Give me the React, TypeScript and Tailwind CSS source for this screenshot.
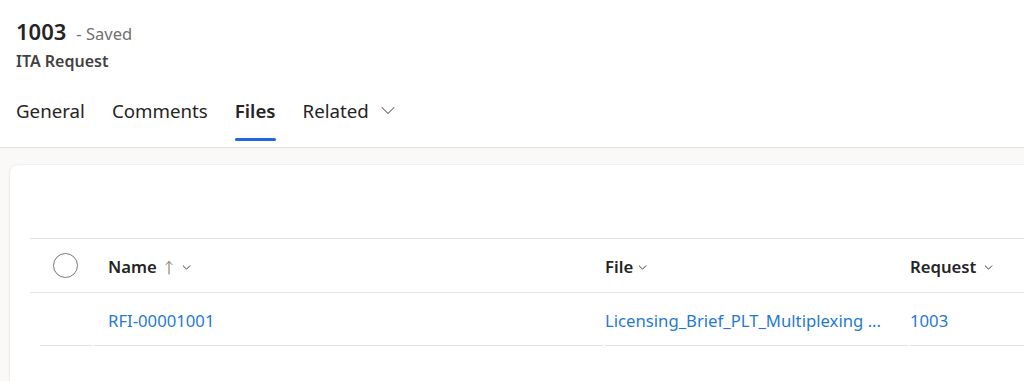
const Chevron = ({ className, w = 1.2 }: { className?: string; w?: number }) => (
  <svg className={className} viewBox="0 0 10 6" fill="none" stroke="currentColor" strokeWidth={w} strokeLinecap="round" strokeLinejoin="round">
    <path d="M1 1l4 4 4-4" />
  </svg>
);

const tabs = ['General', 'Comments', 'Files', 'Related'];

export default function App() {
  return (
    <div className="min-h-[381px] bg-[#faf9f8] font-['Noto_Sans',sans-serif] text-[#242424]">
      <header className="border-b border-[#e0e0e0] bg-white px-4 pt-[16px]">
        <div className="flex items-baseline gap-[10px]">
          <h1 className="text-[22px] font-semibold leading-[30px]">1003</h1>
          <span className="text-[16.5px] text-[#707070]">- Saved</span>
        </div>
        <div className="mt-[3px] text-[16px] font-semibold leading-[22px] text-[#424242]">ITA Request</div>
        <nav className="mt-[25px] flex gap-[27px]">
          {tabs.map((t) => (
            <div key={t} className="flex flex-col">
              <div
                className={`flex items-center gap-[11px] text-[18.7px] leading-[28px] ${
                  t === 'Files' ? 'font-semibold text-[#242424]' : 'text-[#242424]'
                }`}
              >
                {t}
                {t === 'Related' && <Chevron w={0.7} className="h-[9px] w-[16px] text-[#616161]" />}
              </div>
              <div className={`mt-[13px] h-[3px] rounded-full ${t === 'Files' ? 'bg-[#2266e3]' : 'bg-transparent'}`} />
              <div className="h-[6px]" />
            </div>
          ))}
        </nav>
      </header>

      <main className="pl-[10px] pt-[17px]">
        <section className="h-[216px] rounded-tl-lg bg-white pl-5 pt-[73px] shadow-[0_0_2px_rgba(0,0,0,0.12),0_1px_3px_rgba(0,0,0,0.06)]">
          <div className="flex h-[55px] items-center border-y border-[#e3e3e3] pt-[4px] text-[16.7px] font-semibold leading-[22px]">
            <div className="w-[78px] pl-[23px]">
              <div className="-mt-[4px] h-[25px] w-[25px] rounded-full border border-[#7a7a7a]" />
            </div>
            <div className="flex w-[497px] items-center">
              Name
              <svg className="ml-[8px] h-[15px] w-[8px] text-[#7a6a5a]" viewBox="0 0 8 15" fill="none" stroke="currentColor" strokeWidth="1" strokeLinecap="round" strokeLinejoin="round">
                <path d="M4 14V1.5M1 4.5l3-3 3 3" />
              </svg>
              <Chevron className="ml-[9px] h-[5px] w-[9px] text-[#424242]" />
            </div>
            <div className="flex w-[305px] items-center">
              File
              <Chevron className="ml-[5px] h-[5px] w-[9px] text-[#424242]" />
            </div>
            <div className="flex items-center">
              Request
              <Chevron className="ml-[8px] h-[5px] w-[9px] text-[#424242]" />
            </div>
          </div>
          <div className="flex h-[53px] items-center text-[16.7px] leading-[22px] text-[#1f7ad4]">
            <div className="ml-[10px] flex h-full w-[52px] border-b border-[#e3e3e3]" />
            <div className="ml-[2px] flex h-full w-[509px] items-center border-b border-[#e3e3e3] pl-[14px] pt-[4px]">RFI-00001001</div>
            <div className="ml-[2px] flex h-full w-[303px] items-center border-b border-[#e3e3e3] pt-[4px]">
              Licensing_Brief_PLT_Multiplexing ...
            </div>
            <div className="ml-[2px] flex h-full flex-1 items-center border-b border-[#e3e3e3] pt-[4px]">1003</div>
          </div>
        </section>
      </main>
    </div>
  );
}
